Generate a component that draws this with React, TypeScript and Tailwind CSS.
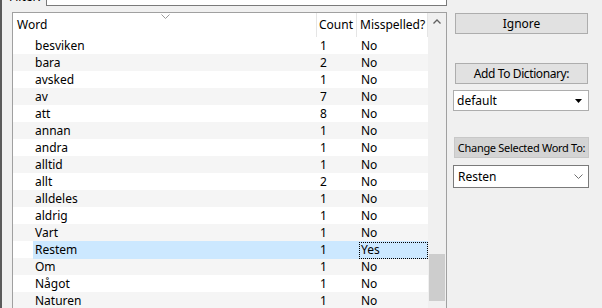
type Row = { word: string; count: number; bad: boolean };

const rows: Row[] = [
  { word: "besviken", count: 1, bad: false },
  { word: "bara", count: 2, bad: false },
  { word: "avsked", count: 1, bad: false },
  { word: "av", count: 7, bad: false },
  { word: "att", count: 8, bad: false },
  { word: "annan", count: 1, bad: false },
  { word: "andra", count: 1, bad: false },
  { word: "alltid", count: 1, bad: false },
  { word: "allt", count: 2, bad: false },
  { word: "alldeles", count: 1, bad: false },
  { word: "aldrig", count: 1, bad: false },
  { word: "Vart", count: 1, bad: false },
  { word: "Restem", count: 1, bad: true },
  { word: "Om", count: 1, bad: false },
  { word: "Något", count: 1, bad: false },
  { word: "Naturen", count: 1, bad: false },
];

const SELECTED = 12;

function WordRow({ r, i }: { r: Row; i: number }) {
  const sel = i === SELECTED;
  const stripe = i % 2 === 1 ? "bg-[#f5f5f5]" : "bg-white";
  const cell = sel ? "bg-[#cce8ff]" : "";
  return (
    <div className={`grid h-[17px] grid-cols-[20px_284px_40px_71px] items-stretch ${stripe}`}>
      <div />
      <div className={`flex items-center pl-[2px] ${cell}`}>{r.word}</div>
      <div className={`flex items-center pl-[3px] ${cell}`}>{r.count}</div>
      <div className={`flex items-center ${cell}`}>
        {sel ? (
          <div className="ml-[2px] flex h-[17px] w-[69px] items-center border border-dotted border-black pl-[1px]">
            {r.bad ? "Yes" : "No"}
          </div>
        ) : (
          <span className="pl-[4px]">{r.bad ? "Yes" : "No"}</span>
        )}
      </div>
    </div>
  );
}

export default function App() {
  return (
    <div className="h-[308px] w-[602px] overflow-hidden border-l-2 border-[#5a5a5a] bg-[#f0f0f0] font-['Noto_Sans',sans-serif] text-[12px] text-black">
      {/* filter strip, mostly scrolled off the top */}
      <div className="flex h-[6px]">
        <div className="-mt-[10px] w-[44px] pl-[7px] leading-[14px]">Filter:</div>
        <div className="h-[6px] w-[401px] border border-t-0 border-[#7a7a7a] bg-white" />
      </div>

      <div className="mt-[6px] flex">
        {/* word list */}
        <div className="ml-[10px] flex h-[320px] w-[435px] border border-[#a0a0a0] bg-white">
          <div className="w-[415px]">
            <div className="relative grid h-[24px] grid-cols-[304px_40px_71px] items-center">
              <div className="flex h-full items-center border-r border-[#e5e5e5] pl-[4px]">Word</div>
              <div className="flex h-full items-center border-r border-[#e5e5e5] pl-[2px]">Count</div>
              <div className="flex h-full items-center border-r border-[#e5e5e5] pl-[3px]">Misspelled?</div>
              <svg className="absolute left-[148px] top-[1px]" width="9" height="5" viewBox="0 0 9 5">
                <path d="M0.5 0.5 L4.5 4.5 L8.5 0.5" fill="none" stroke="#9a9a9a" strokeWidth="1" />
              </svg>
            </div>
            {rows.map((r, i) => (
              <WordRow key={r.word} r={r} i={i} />
            ))}
          </div>
          {/* scrollbar */}
          <div className="flex w-[18px] flex-col bg-[#f0f0f0]">
            <div className="flex h-[17px] items-center justify-center">
              <svg width="8" height="5" viewBox="0 0 8 5">
                <path d="M0.5 4.5 L4 1 L7.5 4.5" fill="none" stroke="#606060" strokeWidth="1.3" />
              </svg>
            </div>
            <div className="mx-[1px] mt-[224px] h-[47px] bg-[#cdcdcd]" />
          </div>
        </div>

        {/* right panel */}
        <div className="ml-[6px] flex w-[136px] flex-col">
          <button className="mt-[1px] ml-[2px] h-[21px] w-[133px] border border-[#adadad] bg-[#e1e1e1] leading-none">
            Ignore
          </button>
          <button className="mt-[29px] ml-[2px] h-[21px] w-[133px] whitespace-nowrap border border-[#adadad] bg-[#e1e1e1] leading-none tracking-[-0.4px]">
            Add To Dictionary:
          </button>
          <div className="mt-[6px] flex h-[21px] w-[136px] items-center justify-between border border-[#adadad] bg-white pl-[3px] pr-[6px]">
            <span>default</span>
            <svg width="7" height="4" viewBox="0 0 7 4">
              <path d="M0 0 L7 0 L3.5 4 Z" fill="#000" />
            </svg>
          </div>
          <button className="mt-[26px] ml-[1px] h-[21px] w-[135px] whitespace-nowrap border border-[#c8c8c8] bg-[#d4d4d4] text-[11px] leading-none tracking-[-0.3px]">
            Change Selected Word To:
          </button>
          <div className="mt-[7px] flex h-[23px] w-[136px] items-center justify-between border border-[#7a7a7a] bg-white pl-[4px] pr-[5px]">
            <span>Resten</span>
            <svg width="9" height="5" viewBox="0 0 9 5">
              <path d="M0.5 0.5 L4.5 4.5 L8.5 0.5" fill="none" stroke="#707070" strokeWidth="1" />
            </svg>
          </div>
        </div>
      </div>
    </div>
  );
}
